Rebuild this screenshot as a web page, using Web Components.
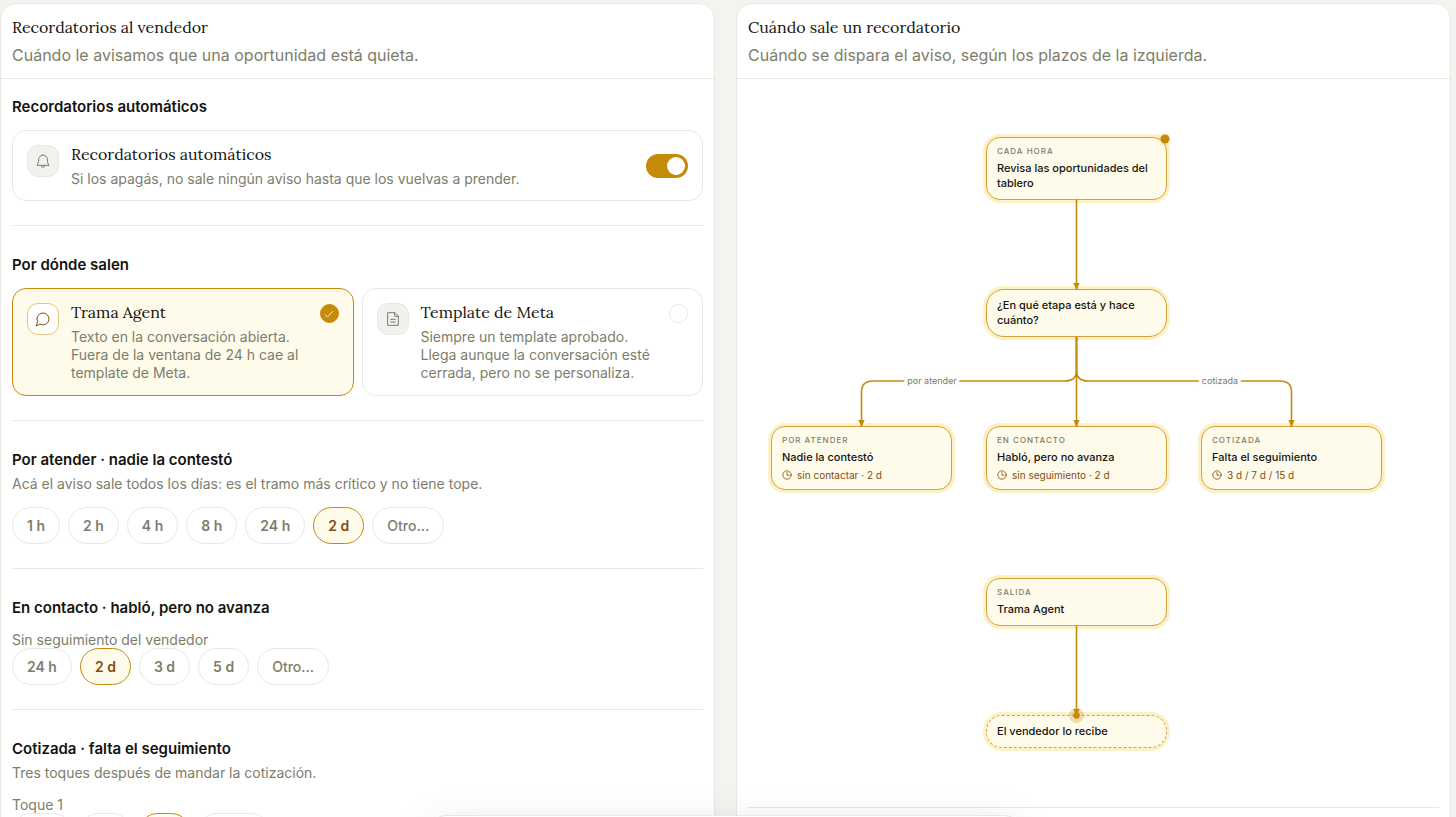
<!DOCTYPE html>
<html lang="es">
<head>
<meta charset="utf-8">
<meta name="viewport" content="width=device-width, initial-scale=1">
<title>Recordatorios al vendedor</title>
<style>
  :root {
    --ink: #14140f;
    --muted: #7d7d6b;
    --line: #e8e8e2;
    --page: #f3f4f0;
    --soft: #f1f2ed;
    --gold: #c68a0b;
    --gold-ink: #854d0e;
    --cream: #fffbeb;
    --halo: #fcf0c5;
    --serif: Lora, "Liberation Serif", serif;
    --sans: Inter, "Liberation Sans", sans-serif;
  }

  body {
    margin: 0;
    height: 100vh;
    overflow: hidden;
    background: var(--page);
    color: var(--ink);
    font-family: var(--sans);
  }
</style>
</head>
<body>
<reminder-page></reminder-page>

<script>
const ICONS = {
  bell: '<path d="M12 3a6.500 6.500 0 0 0-6.500 6.500c0 4.500-1 7-2.500 9h18c-1.500-2-2.500-4.500-2.500-9A6.500 6.500 0 0 0 12 3z"/><path d="M9.500 19a2.500 2.500 0 0 0 5 0"/>',
  chat: '<path d="M7.900 20A9 9 0 1 0 4 16.100L2 22z"/>',
  file: '<path d="M14.500 2.500H4v19h16V8z"/><path d="M14.500 2.500V8H20M8.500 12.500h7M8.500 16.500h7"/>',
  clock: '<circle cx="12" cy="12" r="10"/><path d="M12 6v6.500h5"/>',
  check: '<path d="M4 13l5 5L20 6"/>'
};

/** Base class: opens the shadow root and fills it with the element's markup. */
class BaseElement extends HTMLElement {
  constructor() {
    super();
    this.attachShadow({mode: 'open'});
  }

  connectedCallback() {
    this.shadowRoot.innerHTML = this.render();
  }
}

class LineIcon extends BaseElement {
  render() {
    return `
      <style>
        :host { display: block; width: 16px; height: 16px; flex: none; }
        svg { display: block; width: 100%; height: 100%; fill: none; stroke: currentColor;
              stroke-width: var(--stroke, 1.5); stroke-linecap: round; stroke-linejoin: round; }
      </style>
      <svg viewBox="0 0 24 24" aria-hidden="true">${ICONS[this.getAttribute('name')]}</svg>
    `;
  }
}

class SidePanel extends BaseElement {
  render() {
    return `
      <style>
        :host { display: block; background: #fff; border: 1px solid var(--line); border-radius: 16px 16px 0 0; }
        header { padding: 12px 11px; border-bottom: 1px solid var(--line); }
        h2 { margin: 0; font: 400 16px/22px var(--serif); }
        p { margin: 6px 0 0; font-size: 16px; line-height: 22px; color: var(--muted); }
        .body { padding: 0 11px; }
      </style>
      <header>
        <h2><slot name="title"></slot></h2>
        <p><slot name="subtitle"></slot></p>
      </header>
      <div class="body"><slot></slot></div>
    `;
  }
}

class SettingSection extends BaseElement {
  render() {
    const hint = this.getAttribute('hint');
    return `
      <style>
        :host { display: block; padding: 27px 0 24px; border-bottom: 1px solid var(--line); }
        :host(:first-of-type) { padding-top: 16px; }
        h3 { margin: 0; font-size: 15px; font-weight: 600; line-height: 24px; }
        p { margin: 0; font-size: 14px; line-height: 24px; color: var(--muted); }
        .content { margin-top: 11px; }
      </style>
      <h3>${this.getAttribute('heading')}</h3>
      ${hint ? `<p>${hint}</p>` : ''}
      <div class="content"><slot></slot></div>
    `;
  }
}

/** Card with an icon, a title, a text and one control (a switch or a radio). */
class OptionCard extends BaseElement {
  render() {
    const type = this.getAttribute('type');
    const checked = this.hasAttribute('checked') ? 'checked' : '';
    const control = type === 'switch'
      ? `<input id="control" class="switch" type="checkbox" role="switch" ${checked}>`
      : `<span class="pick"><input id="control" class="radio" type="radio" name="canal" ${checked}>
         <line-icon name="check"></line-icon></span>`;
    return `
      <style>
        :host { display: block; }
        label { box-sizing: border-box; height: 100%; display: flex; gap: 12px; padding: 12px 14px;
                border: 1px solid var(--line); border-radius: 14px; background: #fff; }
        .radio-card { min-height: 108px; }
        :host([checked]) .radio-card { border-color: var(--gold); background: var(--cream); }
        .badge { flex: none; box-sizing: border-box; width: 32px; height: 32px; margin-top: 2px; display: grid;
                 place-items: center; border: 1px solid var(--line); border-radius: 11px;
                 background: var(--soft); color: var(--muted); }
        :host([checked]) .radio-card .badge { background: #fff; border-color: #e6c67e; color: var(--gold-ink); }
        .text { flex: 1; min-width: 0; }
        .title { display: block; font: 400 16px/22px var(--serif); }
        .desc { display: block; margin-top: 5px; font-size: 14px; line-height: 18px; color: var(--muted); }
        input { appearance: none; margin: 0; box-sizing: border-box; }
        .switch { flex: none; align-self: center; width: 42px; height: 24px; padding: 3px; border-radius: 12px;
                  background: #d6d6ce; display: flex; }
        .switch::before { content: ""; width: 18px; height: 18px; border-radius: 50%; background: #fff; }
        .switch:checked { background: var(--gold); justify-content: flex-end; }
        .pick { flex: none; display: grid; place-items: center; align-self: flex-start; margin-top: 3px; }
        .pick > * { grid-area: 1 / 1; }
        .radio { width: 19px; height: 19px; border: 1px solid var(--line); border-radius: 50%; background: #fff; }
        .radio:checked { background: var(--gold); border-color: var(--gold); }
        .pick line-icon { width: 12px; height: 12px; color: #fff; pointer-events: none; visibility: hidden; }
        .radio:checked + line-icon { visibility: visible; }
      </style>
      <label for="control" class="${type}-card">
        <span class="badge"><line-icon name="${this.getAttribute('icon')}"></line-icon></span>
        <span class="text">
          <span class="title">${this.getAttribute('heading')}</span>
          <span class="desc"><slot></slot></span>
        </span>
        ${control}
      </label>
    `;
  }
}

/** Row of pill buttons. "options" is a list separated by "|". */
class PillGroup extends BaseElement {
  render() {
    const value = this.getAttribute('value');
    const label = this.getAttribute('label');
    const pills = this.getAttribute('options').split('|').map(option =>
      `<button type="button" aria-pressed="${option === value}">${option}</button>`).join('');
    return `
      <style>
        :host { display: block; }
        .label { font-size: 14px; line-height: 17px; color: var(--muted); }
        .row { display: flex; flex-wrap: wrap; gap: 8px; }
        button { height: 37px; padding: 0 14px; border: 1px solid var(--line); border-radius: 19px;
                 background: #fff; color: var(--muted); font: 600 14px/20px var(--sans); }
        button:last-child { font-weight: 500; }
        button[aria-pressed="true"] { border-color: var(--gold); background: var(--cream); color: var(--gold-ink); }
      </style>
      ${label ? `<div class="label" id="label">${label}</div>` : ''}
      <div class="row" role="group" ${label ? 'aria-labelledby="label"' : ''}>${pills}</div>
    `;
  }

  connectedCallback() {
    super.connectedCallback();
    this.shadowRoot.querySelector('.row').addEventListener('click', event => {
      const pill = event.target.closest('button');
      if (!pill) return;
      this.shadowRoot.querySelectorAll('button').forEach(b => b.setAttribute('aria-pressed', b === pill));
    });
  }
}

class FlowNode extends BaseElement {
  render() {
    const kicker = this.getAttribute('kicker');
    const meta = this.getAttribute('meta');
    return `
      <style>
        :host { display: flex; flex-direction: column; gap: 4px; box-sizing: border-box; width: 181px;
                padding: 8px 10px; border: 1px solid #d5a23a; border-radius: 14px;
                background: var(--cream); box-shadow: 0 0 0 3px var(--halo); }
        :host([shape="round"]) { border-radius: 18px; }
        :host([shape="end"]) { border-radius: 16px; border-style: dashed; }
        .kicker { font-size: 8px; font-weight: 500; line-height: 11px; letter-spacing: 1px;
                  text-transform: uppercase; color: var(--muted); }
        .title { font-size: 11px; font-weight: 500; line-height: 15px; }
        .meta { display: flex; align-items: center; gap: 5px; font-size: 10px; line-height: 12px; color: var(--gold-ink); }
        .meta line-icon { width: 10px; height: 10px; --stroke: 2; }
      </style>
      ${kicker ? `<div class="kicker">${kicker}</div>` : ''}
      <div class="title"><slot></slot></div>
      ${meta ? `<div class="meta"><line-icon name="clock"></line-icon><span>${meta}</span></div>` : ''}
    `;
  }
}

class FlowCanvas extends BaseElement {
  render() {
    return `
      <style>
        :host { display: block; position: relative; height: 728px; border-bottom: 1px solid var(--line); }
        flow-node, .edge-label, svg { position: absolute; }
        svg { left: 0; top: 0; width: 100%; height: 100%; overflow: visible; }
        .edge { fill: none; stroke: var(--gold); stroke-width: 1.6; }
        .edge-label { transform: translate(-50%, -50%); padding: 0 3px; border-radius: 3px; background: #fcfcfb;
                      font-size: 9px; line-height: 12px; color: var(--muted); white-space: nowrap; }
        .start { left: 238px; top: 58px; }
        .question { left: 238px; top: 210px; }
        .waiting { left: 23px; top: 347px; }
        .contact { left: 238px; top: 347px; }
        .quoted { left: 453px; top: 347px; }
        .output { left: 238px; top: 499px; }
        .finish { left: 238px; top: 636px; }
        .to-waiting { left: 184px; top: 302px; }
        .to-quoted { left: 472px; top: 302px; }
      </style>
      <flow-node class="start" kicker="Cada hora">Revisa las oportunidades del tablero</flow-node>
      <flow-node class="question" shape="round">¿En qué etapa está y hace cuánto?</flow-node>
      <flow-node class="waiting" kicker="Por atender" meta="sin contactar · 2 d">Nadie la contestó</flow-node>
      <flow-node class="contact" kicker="En contacto" meta="sin seguimiento · 2 d">Habló, pero no avanza</flow-node>
      <flow-node class="quoted" kicker="Cotizada" meta="3 d / 7 d / 15 d">Falta el seguimiento</flow-node>
      <flow-node class="output" kicker="Salida">Trama Agent</flow-node>
      <flow-node class="finish" shape="end">El vendedor lo recibe</flow-node>
      <svg aria-hidden="true">
        <defs>
          <marker id="arrow" markerUnits="userSpaceOnUse" markerWidth="8" markerHeight="8" refX="7" refY="4" orient="auto">
            <path d="M0 0.800L7 4L0 7.200z" fill="#c68a0b"/>
          </marker>
        </defs>
        <g class="edge">
          <path marker-end="url(#arrow)" d="M328.500 121V211"/>
          <path marker-end="url(#arrow)" d="M328.500 258V348"/>
          <path marker-end="url(#arrow)" d="M328.500 258V292Q328.500 302 317 302H125Q113.500 302 113.500 313V348"/>
          <path marker-end="url(#arrow)" d="M328.500 258V292Q328.500 302 340 302H532Q543.500 302 543.500 313V348"/>
          <path marker-end="url(#arrow)" d="M328.500 547V637"/>
        </g>
        <circle cx="417" cy="60" r="7" fill="#c68a0b" fill-opacity=".08"/>
        <circle cx="417" cy="60" r="4.500" fill="#c68a0b"/>
        <circle cx="328.500" cy="636.500" r="7.500" fill="#c68a0b" fill-opacity=".28"/>
        <circle cx="328.500" cy="636.500" r="3.200" fill="#c68a0b"/>
      </svg>
      <span class="edge-label to-waiting">por atender</span>
      <span class="edge-label to-quoted">cotizada</span>
    `;
  }
}

class ReminderPage extends BaseElement {
  render() {
    return `
      <style>
        :host { display: block; height: 100%; padding: 3px 5px 0 0; box-sizing: border-box; }
        .columns { display: grid; grid-template-columns: 1fr 1fr; gap: 21px; min-height: 100%; }
        .cards { display: grid; grid-template-columns: 1fr 1fr; gap: 8px; }
        /* Save bar, only its upper edge shows above the fold. */
        .dock { position: fixed; left: 430px; right: 435px; bottom: -58px; height: 58px;
                border: 1px solid var(--line); border-radius: 16px; background: #fff;
                box-shadow: 0 8px 40px rgba(20, 20, 15, .10); }
      </style>
      <main class="columns">
        <side-panel>
          <span slot="title">Recordatorios al vendedor</span>
          <span slot="subtitle">Cuándo le avisamos que una oportunidad está quieta.</span>
          <setting-section heading="Recordatorios automáticos">
            <option-card type="switch" icon="bell" heading="Recordatorios automáticos" checked>Si los apagás, no sale ningún aviso hasta que los vuelvas a prender.</option-card>
          </setting-section>
          <setting-section heading="Por dónde salen">
            <div class="cards">
              <option-card type="radio" icon="chat" heading="Trama Agent" checked>Texto en la conversación abierta. Fuera de la ventana de 24 h cae al template de Meta.</option-card>
              <option-card type="radio" icon="file" heading="Template de Meta">Siempre un template aprobado. Llega aunque la conversación esté cerrada, pero no se personaliza.</option-card>
            </div>
          </setting-section>
          <setting-section heading="Por atender · nadie la contestó" hint="Acá el aviso sale todos los días: es el tramo más crítico y no tiene tope.">
            <pill-group options="1 h|2 h|4 h|8 h|24 h|2 d|Otro…" value="2 d"></pill-group>
          </setting-section>
          <setting-section heading="En contacto · habló, pero no avanza">
            <pill-group label="Sin seguimiento del vendedor" options="24 h|2 d|3 d|5 d|Otro…" value="2 d"></pill-group>
          </setting-section>
          <setting-section heading="Cotizada · falta el seguimiento" hint="Tres toques después de mandar la cotización.">
            <pill-group label="Toque 1" options="24 h|2 d|3 d|Otro…" value="3 d"></pill-group>
          </setting-section>
        </side-panel>
        <side-panel>
          <span slot="title">Cuándo sale un recordatorio</span>
          <span slot="subtitle">Cuándo se dispara el aviso, según los plazos de la izquierda.</span>
          <flow-canvas></flow-canvas>
        </side-panel>
      </main>
      <div class="dock"></div>
    `;
  }
}

customElements.define('line-icon', LineIcon);
customElements.define('side-panel', SidePanel);
customElements.define('setting-section', SettingSection);
customElements.define('option-card', OptionCard);
customElements.define('pill-group', PillGroup);
customElements.define('flow-node', FlowNode);
customElements.define('flow-canvas', FlowCanvas);
customElements.define('reminder-page', ReminderPage);
</script>
</body>
</html>
